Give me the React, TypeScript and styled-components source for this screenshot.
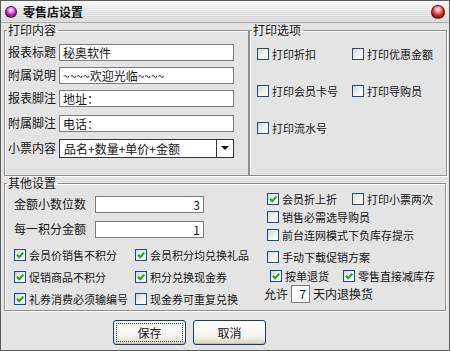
import styled, { createGlobalStyle } from 'styled-components';

const GlobalStyle = createGlobalStyle`
  html, body {
    margin: 0;
    padding: 0;
    background: #e4e4e4;
  }
  body {
    font-family: "Noto Sans CJK SC", "Noto Sans", sans-serif;
    font-size: 12px;
    color: #151515;
  }
`;

const Window = styled.div`
  width: 450px;
  height: 351px;
  box-sizing: border-box;
  border: 1px solid #5c5c5c;
  background: #e4e4e4;
  display: flex;
  flex-direction: column;
  overflow: hidden;
`;

const TitleBar = styled.div`
  height: 21px;
  flex: none;
  display: flex;
  align-items: center;
  padding: 0 4px 0 4px;
  gap: 6px;
  border-bottom: 1px solid #a8a8a8;
  background:
    repeating-linear-gradient(to bottom, rgba(255, 255, 255, 0.45) 0 1px, transparent 1px 2px),
    linear-gradient(#f7f7f7, #dcdcdc 60%, #d2d2d2);
`;

const TitleText = styled.span`
  font-weight: bold;
  font-size: 12px;
  line-height: 21px;
  flex: 1;
`;

const Sphere = styled.span<{ $color: string; $size: number }>`
  width: ${(p) => p.$size}px;
  height: ${(p) => p.$size}px;
  border-radius: 50%;
  flex: none;
  border: 1px solid rgba(0, 0, 0, 0.55);
  box-sizing: border-box;
  background: radial-gradient(circle at 50% 30%, #fff 0, ${(p) => p.$color} 55%, #300 110%);
`;

const Body = styled.div`
  flex: 1;
  display: flex;
  flex-direction: column;
  padding: 0 3px;
`;

const TopArea = styled.div`
  display: grid;
  grid-template-columns: 245px 198px;
  height: 153px;
`;

const Group = styled.fieldset`
  margin: 0;
  padding: 0;
  min-width: 0;
  border: 1px solid #8e8e8e;
  box-shadow: inset 1px 1px 0 #fff, 1px 1px 0 #fff;
`;

const Legend = styled.legend`
  margin-left: 2px;
  padding: 0 2px 0 1px;
  font-size: 12px;
  line-height: 14px;
  color: #151515;
`;

const LeftContent = styled.div`
  display: flex;
  flex-direction: column;
  gap: 5px;
  padding: 6px 0 0 3px;
`;

const FormRow = styled.div<{ $mt?: number }>`
  display: flex;
  align-items: center;
  gap: 3px;
  height: 18px;
  margin-top: ${(p) => p.$mt ?? 0}px;
`;

const FieldLabel = styled.span<{ $w?: number }>`
  width: ${(p) => (p.$w ? `${p.$w}px` : 'auto')};
  flex: none;
  white-space: nowrap;
  font-size: 12px;
  line-height: 18px;
`;

const TextBox = styled.div<{ $w: number; $align?: string; $h?: number }>`
  width: ${(p) => p.$w}px;
  height: ${(p) => p.$h ?? 17}px;
  box-sizing: border-box;
  border: 1px solid #7c7c7c;
  background: #fff;
  padding: 0 3px;
  font-size: 12px;
  line-height: ${(p) => (p.$h ?? 17) - 2}px;
  text-align: ${(p) => p.$align ?? 'left'};
  white-space: nowrap;
  overflow: hidden;
  flex: none;
`;

const Select = styled.div`
  width: 175px;
  height: 19px;
  box-sizing: border-box;
  border: 1px solid #333;
  background: #fff;
  display: flex;
  flex: none;
`;

const SelectValue = styled.div`
  flex: 1;
  padding: 0 4px;
  font-size: 12px;
  line-height: 17px;
  white-space: nowrap;
`;

const SelectArrow = styled.div`
  width: 16px;
  border-left: 1px solid #333;
  display: flex;
  align-items: center;
  justify-content: center;
  &::after {
    content: '';
    border-left: 4px solid transparent;
    border-right: 4px solid transparent;
    border-top: 4px solid #111;
  }
`;

const OptionsGrid = styled.div`
  display: grid;
  grid-template-columns: 95px 1fr;
  row-gap: 19px;
  padding: 8px 0 0 7px;
`;

const CheckLine = styled.label<{ $w?: number; $indent?: number }>`
  display: flex;
  align-items: center;
  gap: 3px;
  height: 18px;
  width: ${(p) => (p.$w ? `${p.$w}px` : 'auto')};
  padding-left: ${(p) => p.$indent ?? 0}px;
  flex: none;
  white-space: nowrap;
  font-size: 11px;
  line-height: 18px;
`;

const Box = styled.span`
  width: 12px;
  height: 12px;
  box-sizing: border-box;
  border: 1px solid #1c4f80;
  background: linear-gradient(135deg, #d8d8d2, #f4f4f0 60%, #fff);
  display: flex;
  align-items: center;
  justify-content: center;
  flex: none;
`;

function Check({ checked, children, w, indent }: { checked?: boolean; children: string; w?: number; indent?: number }) {
  return (
    <CheckLine $w={w} $indent={indent}>
      <Box>
        {checked && (
          <svg width="10" height="10" viewBox="0 0 10 10">
            <path d="M2 4.8 L4.2 7.2 L8.3 2.6" fill="none" stroke="#21a121" strokeWidth="2" />
          </svg>
        )}
      </Box>
      {children}
    </CheckLine>
  );
}

const OtherGroup = styled(Group)`
  height: 135px;
  box-sizing: border-box;
`;

const OtherContent = styled.div`
  display: grid;
  grid-template-columns: 250px 1fr;
  padding-left: 9px;
`;

const LeftStack = styled.div`
  display: flex;
  flex-direction: column;
  gap: 7px;
  padding-top: 5px;
`;

const BoolGrid = styled.div`
  display: grid;
  grid-template-columns: 121px 1fr;
  row-gap: 4px;
  margin-top: 1px;
`;

const RightStack = styled.div`
  display: flex;
  flex-direction: column;
`;

const InlineRow = styled.div<{ $mt?: number; $indent?: number }>`
  display: flex;
  align-items: center;
  gap: 3px;
  height: 18px;
  margin-top: ${(p) => p.$mt ?? 0}px;
  padding-left: ${(p) => p.$indent ?? 0}px;
`;

const ButtonBar = styled.div`
  display: flex;
  gap: 7px;
  padding: 9px 0 0 109px;
`;

const Button = styled.button<{ $default?: boolean }>`
  width: 73px;
  height: 25px;
  box-sizing: border-box;
  border: 1px solid #1b3a66;
  border-radius: 3px;
  background: linear-gradient(#ffffff, #f3f3ee 70%, #d6d0c5);
  font-family: "Noto Sans CJK SC", "Noto Sans", sans-serif;
  font-size: 12px;
  color: #151515;
  padding: 0;
  outline: ${(p) => (p.$default ? '1px dotted #444' : 'none')};
  outline-offset: -4px;
  box-shadow: inset 0 -1px 0 #c8c0b0;
`;

export default function App() {
  return (
    <Window>
      <GlobalStyle />
      <TitleBar>
        <Sphere $color="#c020c8" $size={12} />
        <TitleText>零售店设置</TitleText>
        <Sphere $color="#e02020" $size={14} />
      </TitleBar>
      <Body>
        <TopArea>
          <Group>
            <Legend>打印内容</Legend>
            <LeftContent>
              <FormRow>
                <FieldLabel $w={48}>报表标题</FieldLabel>
                <TextBox $w={175}>秘奥软件</TextBox>
              </FormRow>
              <FormRow>
                <FieldLabel $w={48}>附属说明</FieldLabel>
                <TextBox $w={175}>~~~~欢迎光临~~~~</TextBox>
              </FormRow>
              <FormRow>
                <FieldLabel $w={48}>报表脚注</FieldLabel>
                <TextBox $w={175}>地址：</TextBox>
              </FormRow>
              <FormRow $mt={2}>
                <FieldLabel $w={48}>附属脚注</FieldLabel>
                <TextBox $w={175}>电话：</TextBox>
              </FormRow>
              <FormRow $mt={2}>
                <FieldLabel $w={48}>小票内容</FieldLabel>
                <Select>
                  <SelectValue>品名+数量+单价+金额</SelectValue>
                  <SelectArrow />
                </Select>
              </FormRow>
            </LeftContent>
          </Group>
          <Group>
            <Legend>打印选项</Legend>
            <OptionsGrid>
              <Check>打印折扣</Check>
              <Check>打印优惠金额</Check>
              <Check>打印会员卡号</Check>
              <Check>打印导购员</Check>
              <Check>打印流水号</Check>
            </OptionsGrid>
          </Group>
        </TopArea>
        <OtherGroup>
          <Legend>其他设置</Legend>
          <OtherContent>
            <LeftStack>
              <FormRow>
                <FieldLabel $w={78}>金额小数位数</FieldLabel>
                <TextBox $w={109} $align="right">3</TextBox>
              </FormRow>
              <FormRow>
                <FieldLabel $w={78}>每一积分金额</FieldLabel>
                <TextBox $w={109} $align="right">1</TextBox>
              </FormRow>
              <BoolGrid>
                <Check checked>会员价销售不积分</Check>
                <Check checked>会员积分均兑换礼品</Check>
                <Check checked>促销商品不积分</Check>
                <Check checked>积分兑换现金券</Check>
                <Check checked>礼券消费必须输编号</Check>
                <Check>现金券可重复兑换</Check>
              </BoolGrid>
            </LeftStack>
            <RightStack>
              <InlineRow $indent={3}>
                <Check checked w={82}>会员折上折</Check>
                <Check>打印小票两次</Check>
              </InlineRow>
              <InlineRow $indent={3}>
                <Check>销售必需选导购员</Check>
              </InlineRow>
              <InlineRow $indent={3}>
                <Check>前台连网模式下负库存提示</Check>
              </InlineRow>
              <InlineRow $indent={3} $mt={4}>
                <Check>手动下载促销方案</Check>
              </InlineRow>
              <InlineRow $indent={6} $mt={1}>
                <Check checked w={70}>按单退货</Check>
                <Check checked>零售直接减库存</Check>
              </InlineRow>
              <InlineRow>
                <FieldLabel>允许</FieldLabel>
                <TextBox $w={19} $h={18} $align="right">7</TextBox>
                <FieldLabel>天内退换货</FieldLabel>
              </InlineRow>
            </RightStack>
          </OtherContent>
        </OtherGroup>
        <ButtonBar>
          <Button $default>保存</Button>
          <Button>取消</Button>
        </ButtonBar>
      </Body>
    </Window>
  );
}
